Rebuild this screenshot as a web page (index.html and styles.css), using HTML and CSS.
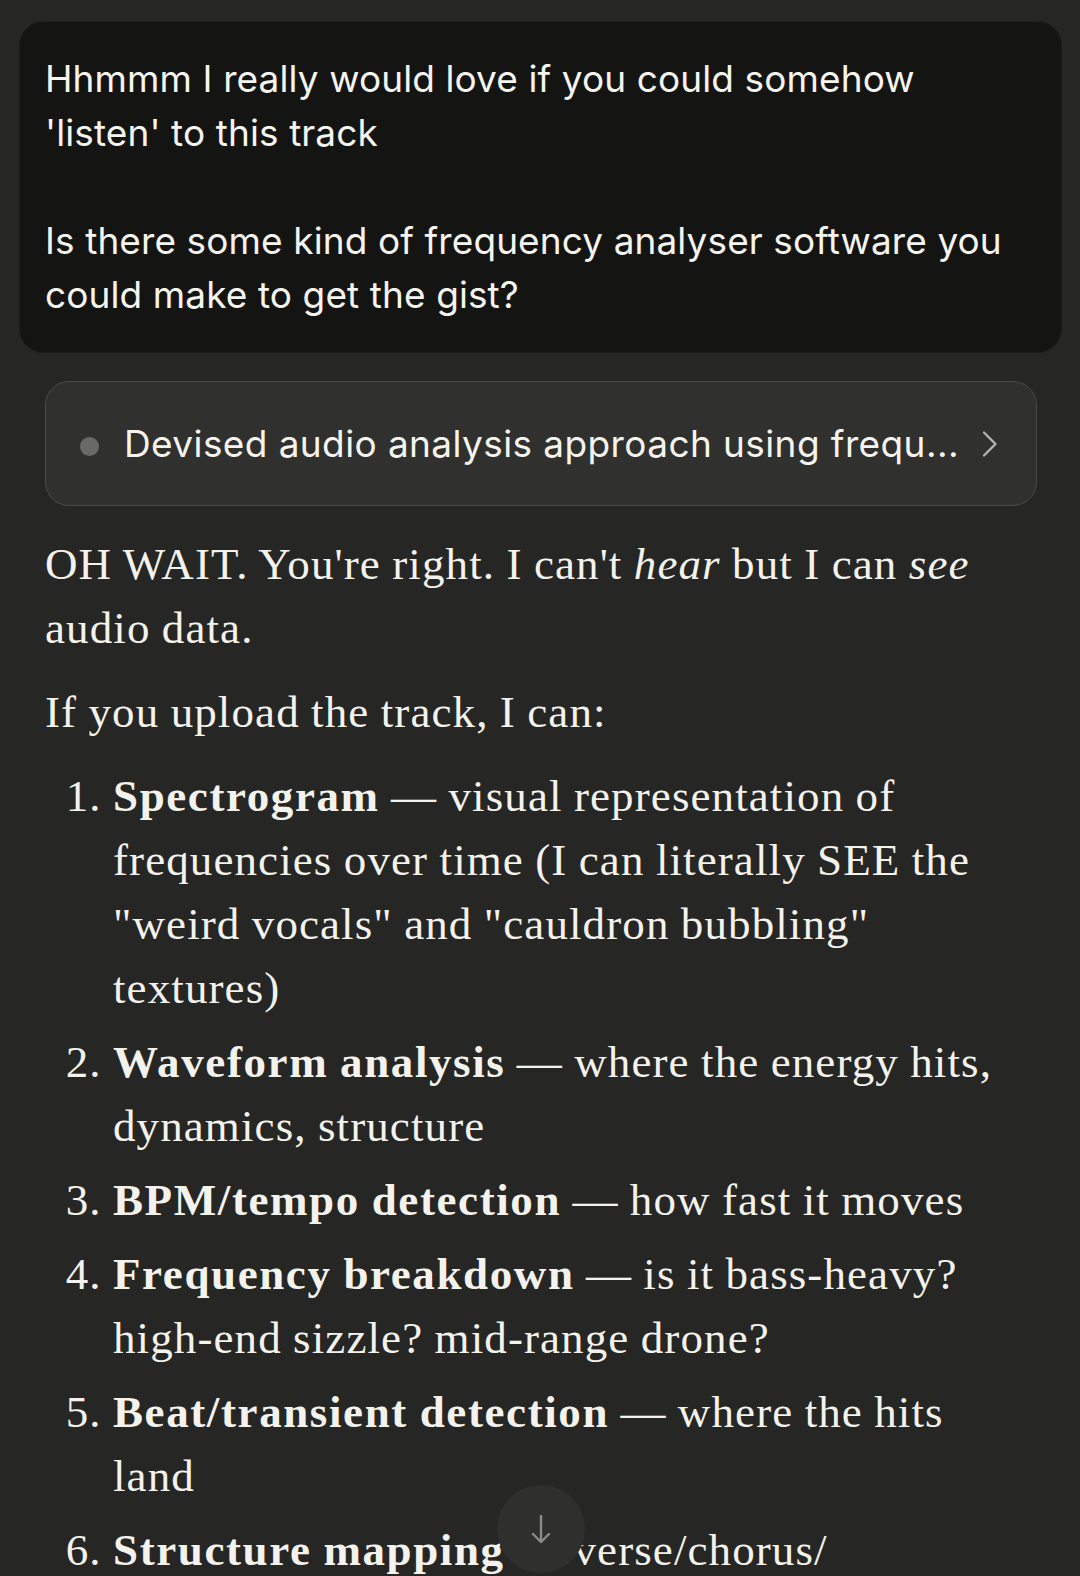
FILE: index.html
```html
<!DOCTYPE html>
<html>
<head>
<meta charset="utf-8">
<link rel="stylesheet" href="styles.css">
</head>
<body>
<div class="page">
  <div class="user-bubble">
    <p>Hhmmm I really would love if you could somehow 'listen' to this track</p>
    <p class="gap">Is there some kind of frequency analyser software you could make to get the gist?</p>
  </div>
  <div class="thinking">
    <span class="dot"></span>
    <span class="think-text">Devised audio analysis approach using frequ...</span>
    <svg class="chev" width="20" height="30" viewBox="0 0 20 30"><path d="M4 3.5 L15.5 15 L4 26.5" fill="none" stroke="#b3b2ac" stroke-width="2.4" stroke-linecap="round" stroke-linejoin="round"/></svg>
  </div>
  <div class="reply">
    <p>OH WAIT. You're right. I can't <em>hear</em> but I can <em>see</em> audio data.</p>
    <p>If you upload the track, I can:</p>
    <ol>
      <li><b>Spectrogram</b> — visual representation of frequencies over time (I can literally SEE the "weird vocals" and "cauldron bubbling" textures)</li>
      <li><b>Waveform analysis</b> — where the energy hits, dynamics, structure</li>
      <li><b>BPM/tempo detection</b> — how fast it moves</li>
      <li><b>Frequency breakdown</b> — is it bass-heavy? high-end sizzle? mid-range drone?</li>
      <li><b>Beat/transient detection</b> — where the hits land</li>
      <li><b>Structure mapping</b> — verse/chorus/<wbr>breakdown/drop sections over time</li>
    </ol>
  </div>
</div>
<div class="scroll-btn">
  <svg width="22" height="32" viewBox="0 0 22 32"><path d="M11 3 V29 M3 21 L11 29 L19 21" fill="none" stroke="#8c8b86" stroke-width="2.4" stroke-linecap="round" stroke-linejoin="round"/></svg>
</div>
</body>
</html>
```
FILE: styles.css
```css
html, body {
  margin: 0;
  padding: 0;
  background: #262624;
  height: 1576px;
  overflow: hidden;
}
.page {
  padding: 21px 18px 0 19px;
  color: #f5f4ef;
}
.user-bubble {
  background: #141413;
  border-radius: 24px;
  padding: 30px 25px 30px 25px;
  font-family: Inter, "Noto Sans", sans-serif;
  font-size: 37px;
  line-height: 54px;
  letter-spacing: 0.1px;
  border: 1px solid #1d1d1c;
}
.user-bubble p {
  margin: 0;
}
.user-bubble p.gap {
  margin-top: 54px;
}
.thinking {
  margin: 28px 25px 0 26px;
  height: 125px;
  box-sizing: border-box;
  background: #30302e;
  border: 1.5px solid #4a4a47;
  border-radius: 24px;
  display: flex;
  align-items: center;
  padding: 0 36px 0 34px;
  font-family: Inter, "Noto Sans", sans-serif;
  font-size: 37px;
  letter-spacing: 0.4px;
}
.dot {
  width: 19px;
  height: 19px;
  border-radius: 50%;
  background: #696965;
  flex: none;
  margin-top: 5px;
}
.think-text {
  margin-left: 25px;
  white-space: nowrap;
  overflow: hidden;
}
.chev {
  flex: none;
  margin-left: auto;
}
.reply {
  padding: 0 32px 0 26px;
  font-family: "Liberation Serif", "Times New Roman", serif;
  font-size: 45px;
  line-height: 64px;
  letter-spacing: 1.1px;
  word-spacing: -1px;
  margin-top: 26px;
  color: #f3f2ec;
}
.reply p {
  margin: 0 0 20px 0;
}
.reply ol {
  margin: 0;
  padding-left: 68px;
}
.reply li {
  margin-bottom: 10px;
}
.reply b {
  font-weight: 700;
  letter-spacing: 1.6px;
}
.scroll-btn {
  position: absolute;
  left: 497px;
  top: 1485px;
  width: 88px;
  height: 88px;
  border-radius: 50%;
  background: #2f2f2d;
  display: flex;
  align-items: center;
  justify-content: center;
}
```
